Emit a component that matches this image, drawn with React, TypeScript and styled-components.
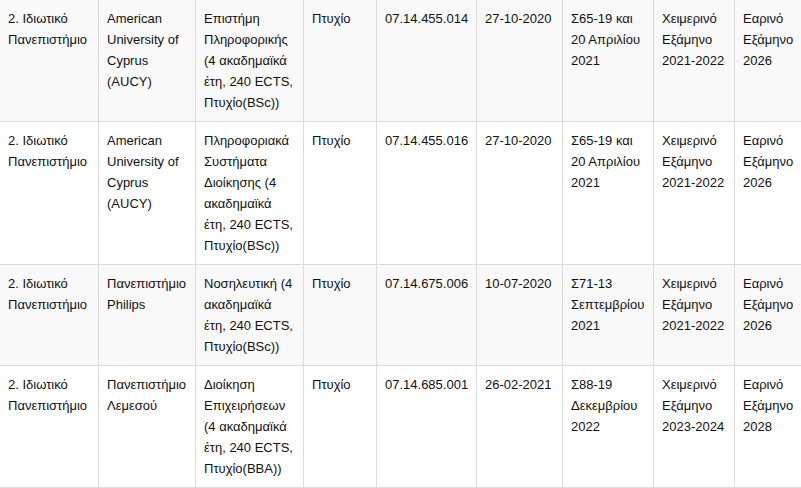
import React from "react";
import styled, { createGlobalStyle } from "styled-components";

const GlobalStyle = createGlobalStyle`
  html, body {
    margin: 0;
    padding: 0;
    background: #ffffff;
    overflow: hidden;
  }
  body {
    font-family: "Liberation Sans", Arial, sans-serif;
    color: #111111;
  }
`;

const Page = styled.div`
  width: 801px;
  height: 488px;
  overflow: hidden;
`;

const Table = styled.table`
  border-collapse: separate;
  border-spacing: 0;
  table-layout: fixed;
  width: 821px;
  font-size: 13px;
  line-height: 21px;
`;

const Row = styled.tr<{ $striped: boolean }>`
  background: ${(p) => (p.$striped ? "#f9f9f9" : "#ffffff")};
`;

const Cell = styled.td`
  box-sizing: border-box;
  vertical-align: top;
  text-align: left;
  padding: 8px 8px 8px 8px;
  border-right: 1px solid #dddddd;
  border-bottom: 1px solid #dddddd;
`;

const widths = [99, 97, 108, 73, 100, 86, 91, 81, 86];

type Entry = string[];

const rows: Entry[] = [
  [
    "2. Ιδιωτικό Πανεπιστήμιο",
    "American University of Cyprus (AUCY)",
    "Επιστήμη Πληροφορικής (4 ακαδημαϊκά έτη, 240 ECTS, Πτυχίο(BSc))",
    "Πτυχίο",
    "07.14.455.014",
    "27-10-2020",
    "Σ65-19 και 20 Απριλίου 2021",
    "Χειμερινό Εξάμηνο 2021-2022",
    "Εαρινό Εξάμηνο 2026",
  ],
  [
    "2. Ιδιωτικό Πανεπιστήμιο",
    "American University of Cyprus (AUCY)",
    "Πληροφοριακά Συστήματα Διοίκησης (4 ακαδημαϊκά έτη, 240 ECTS, Πτυχίο(BSc))",
    "Πτυχίο",
    "07.14.455.016",
    "27-10-2020",
    "Σ65-19 και 20 Απριλίου 2021",
    "Χειμερινό Εξάμηνο 2021-2022",
    "Εαρινό Εξάμηνο 2026",
  ],
  [
    "2. Ιδιωτικό Πανεπιστήμιο",
    "Πανεπιστήμιο Philips",
    "Νοσηλευτική (4 ακαδημαϊκά έτη, 240 ECTS, Πτυχίο(BSc))",
    "Πτυχίο",
    "07.14.675.006",
    "10-07-2020",
    "Σ71-13 Σεπτεμβρίου 2021",
    "Χειμερινό Εξάμηνο 2021-2022",
    "Εαρινό Εξάμηνο 2026",
  ],
  [
    "2. Ιδιωτικό Πανεπιστήμιο",
    "Πανεπιστήμιο Λεμεσού",
    "Διοίκηση Επιχειρήσεων (4 ακαδημαϊκά έτη, 240 ECTS, Πτυχίο(BBA))",
    "Πτυχίο",
    "07.14.685.001",
    "26-02-2021",
    "Σ88-19 Δεκεμβρίου 2022",
    "Χειμερινό Εξάμηνο 2023-2024",
    "Εαρινό Εξάμηνο 2028",
  ],
];

export default function App() {
  return (
    <Page>
      <GlobalStyle />
      <Table>
        <colgroup>
          {widths.map((w, i) => (
            <col key={i} style={{ width: w }} />
          ))}
        </colgroup>
        <tbody>
          {rows.map((r, i) => (
            <Row key={i} $striped={i % 2 === 0}>
              {r.map((c, j) => (
                <Cell key={j}>{c}</Cell>
              ))}
            </Row>
          ))}
        </tbody>
      </Table>
    </Page>
  );
}
